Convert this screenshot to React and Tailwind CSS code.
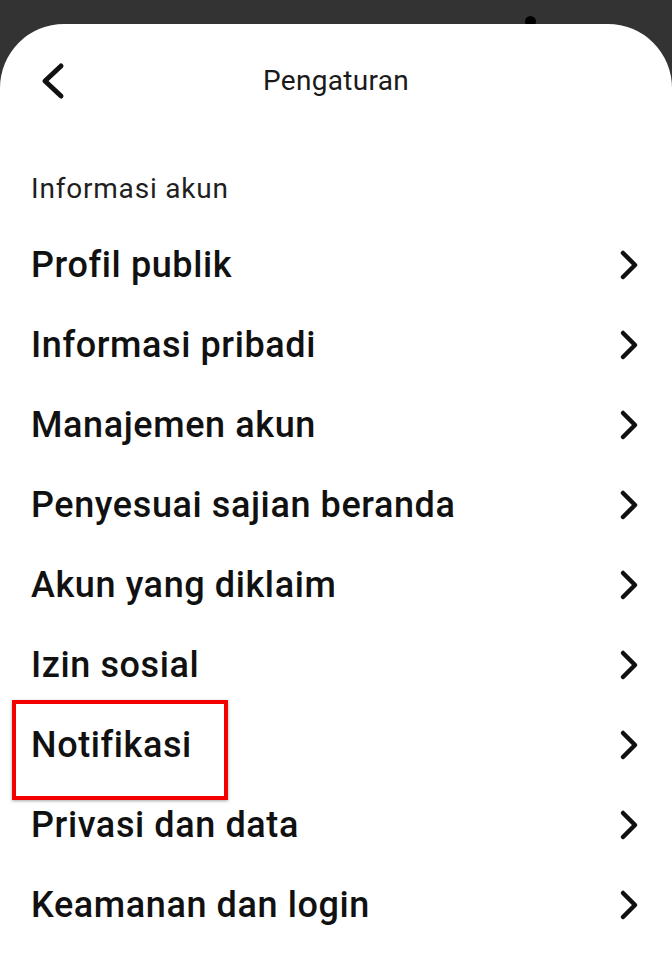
import React from "react";

const items = [
  "Profil publik",
  "Informasi pribadi",
  "Manajemen akun",
  "Penyesuai sajian beranda",
  "Akun yang diklaim",
  "Izin sosial",
  "Notifikasi",
  "Privasi dan data",
  "Keamanan dan login",
];

function ChevronRight() {
  return (
    <svg width="24" height="32" viewBox="0 0 24 32" fill="none">
      <path d="M5 4 L17 16 L5 28" stroke="#111" strokeWidth="4.5" strokeLinecap="round" strokeLinejoin="round" />
    </svg>
  );
}

function ChevronLeft() {
  return (
    <svg width="30" height="40" viewBox="0 0 30 40" fill="none">
      <path d="M24 5 L8 20 L24 35" stroke="#111" strokeWidth="5" strokeLinecap="round" strokeLinejoin="round" />
    </svg>
  );
}

export default function App() {
  return (
    <div className="relative h-[960px] w-[672px] overflow-hidden bg-[#333333] pt-[24px]" style={{ fontFamily: "Roboto, 'Noto Sans', sans-serif" }}>
      <div className="absolute left-[525px] top-[16px] h-[11px] w-[11px] rounded-full bg-black" />
      <div className="relative h-[936px] rounded-t-[64px] bg-white">
        <div className="relative flex h-[80px] items-center justify-center pt-[34px]">
          <div className="absolute left-[37px] top-[37px]">
            <ChevronLeft />
          </div>
          <span className="text-[28px] leading-[32px] tracking-[0.3px] text-[#1a1a1a]">Pengaturan</span>
        </div>
        <div className="mt-[70px] mb-[21px] h-[30px] pl-[31px] text-[28px] leading-[30px] tracking-[0.8px] text-[#1f1f1f]">
          Informasi akun
        </div>
        <div className="flex flex-col">
          {items.map((t) => (
            <div key={t} className="relative flex h-[80px] items-center justify-between pl-[31px] pr-[30px]">
              <span className="text-[36px] font-medium leading-[40px] tracking-[0.6px] text-[#111]">{t}</span>
              <ChevronRight />
              {t === "Notifikasi" && (
                <div className="absolute left-[12px] top-[-5px] h-[100px] w-[216px] border-[4px] border-[#f20000] shadow-[0_1px_3px_rgba(0,0,0,0.35)]" />
              )}
            </div>
          ))}
        </div>
      </div>
    </div>
  );
}
